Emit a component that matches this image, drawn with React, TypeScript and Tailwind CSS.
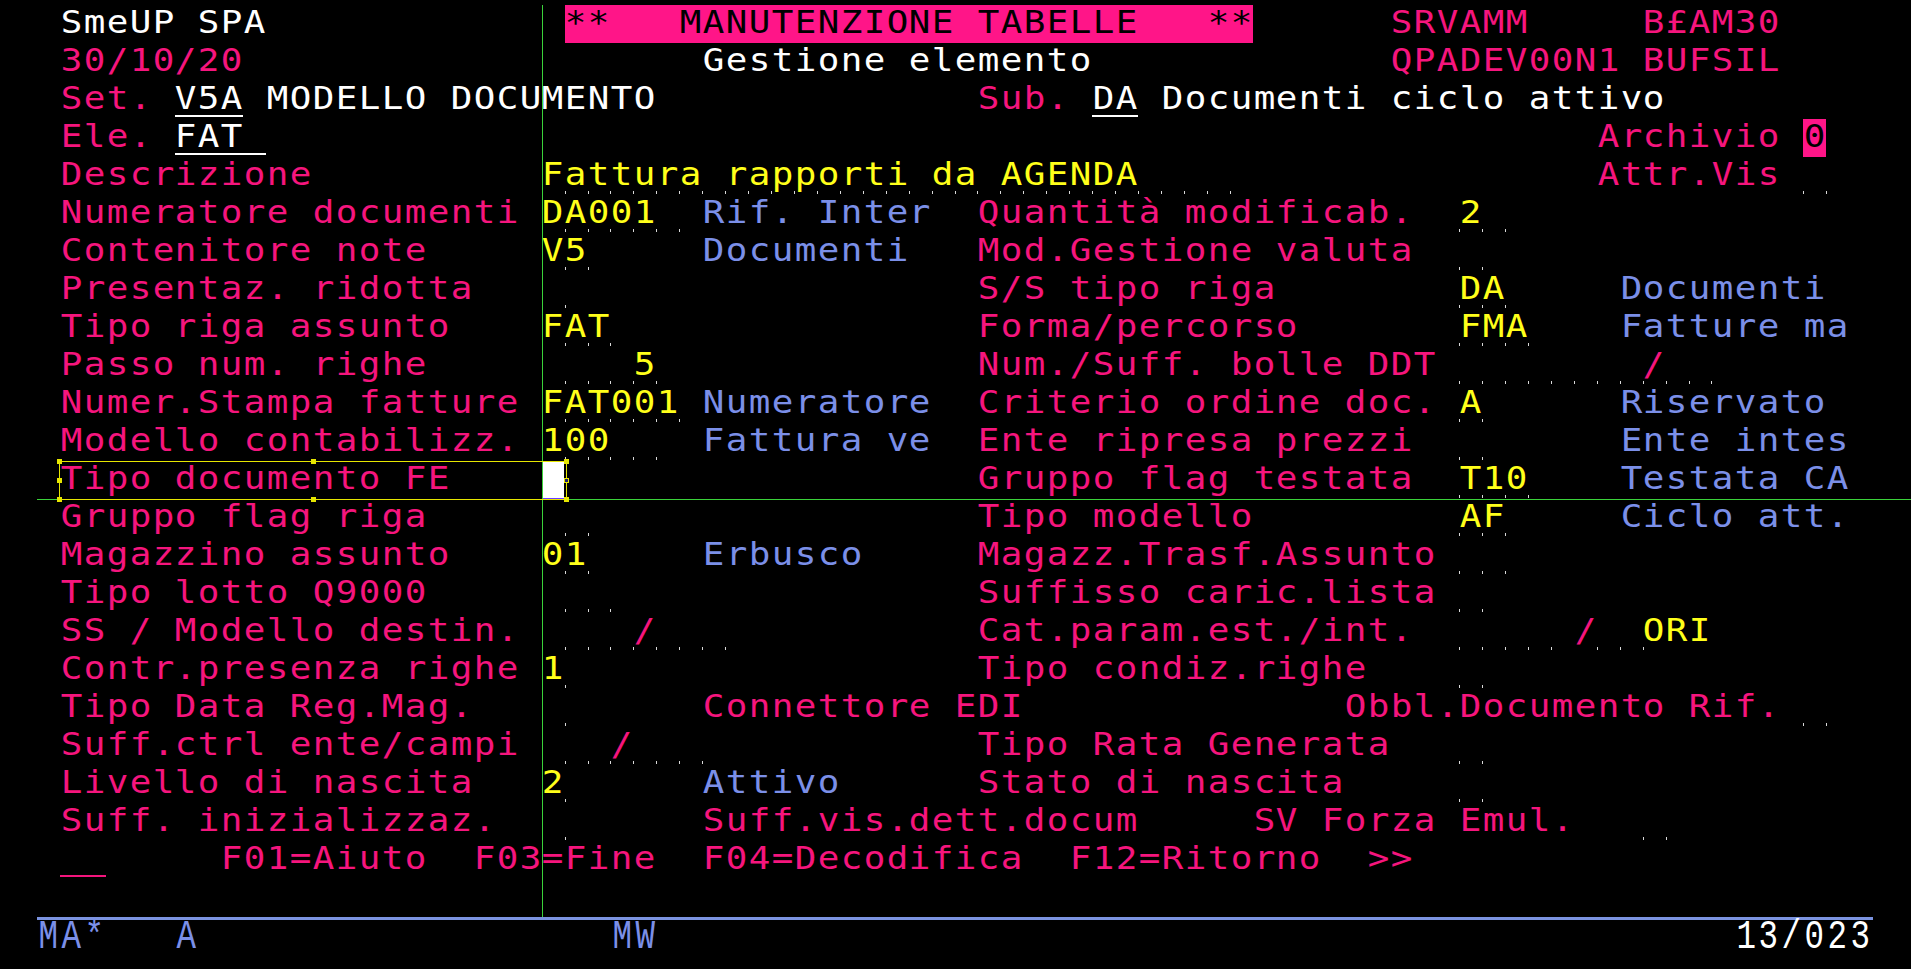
import React from 'react';

type K = 'p' | 'w' | 'y' | 'b' | 'bar' | 'rev' | 'cur';
type Seg = { c: number; t: string; k: K; u?: boolean };
type Cell = { ch: string; k: K | ''; u?: boolean; tick?: boolean };

const rows: Seg[][] = [
  [{ c: 1, t: 'SmeUP SPA', k: 'w' }, { c: 23, t: '**   MANUTENZIONE TABELLE   **', k: 'bar' }, { c: 59, t: 'SRVAMM', k: 'p' }, { c: 70, t: 'B£AM30', k: 'p' }],
  [{ c: 1, t: '30/10/20', k: 'p' }, { c: 29, t: 'Gestione elemento', k: 'w' }, { c: 59, t: 'QPADEV00N1 BUFSIL', k: 'p' }],
  [{ c: 1, t: 'Set.', k: 'p' }, { c: 6, t: 'V5A', k: 'w', u: true }, { c: 9, t: ' MODELLO DOCUMENTO', k: 'w' }, { c: 41, t: 'Sub.', k: 'p' }, { c: 46, t: 'DA', k: 'w', u: true }, { c: 49, t: 'Documenti ciclo attivo', k: 'w' }],
  [{ c: 1, t: 'Ele.', k: 'p' }, { c: 6, t: 'FAT ', k: 'w', u: true }, { c: 68, t: 'Archivio', k: 'p' }, { c: 77, t: '0', k: 'rev' }],
  [{ c: 1, t: 'Descrizione', k: 'p' }, { c: 22, t: 'Fattura rapporti da AGENDA', k: 'y' }, { c: 68, t: 'Attr.Vis', k: 'p' }],
  [{ c: 1, t: 'Numeratore documenti', k: 'p' }, { c: 22, t: 'DA001', k: 'y' }, { c: 29, t: 'Rif. Inter', k: 'b' }, { c: 41, t: 'Quantità modificab.', k: 'p' }, { c: 62, t: '2', k: 'y' }],
  [{ c: 1, t: 'Contenitore note', k: 'p' }, { c: 22, t: 'V5', k: 'y' }, { c: 29, t: 'Documenti', k: 'b' }, { c: 41, t: 'Mod.Gestione valuta', k: 'p' }],
  [{ c: 1, t: 'Presentaz. ridotta', k: 'p' }, { c: 41, t: 'S/S tipo riga', k: 'p' }, { c: 62, t: 'DA', k: 'y' }, { c: 69, t: 'Documenti', k: 'b' }],
  [{ c: 1, t: 'Tipo riga assunto', k: 'p' }, { c: 22, t: 'FAT', k: 'y' }, { c: 41, t: 'Forma/percorso', k: 'p' }, { c: 62, t: 'FMA', k: 'y' }, { c: 69, t: 'Fatture ma', k: 'b' }],
  [{ c: 1, t: 'Passo num. righe', k: 'p' }, { c: 26, t: '5', k: 'y' }, { c: 41, t: 'Num./Suff. bolle DDT', k: 'p' }, { c: 70, t: '/', k: 'p' }],
  [{ c: 1, t: 'Numer.Stampa fatture', k: 'p' }, { c: 22, t: 'FAT001', k: 'y' }, { c: 29, t: 'Numeratore', k: 'b' }, { c: 41, t: 'Criterio ordine doc.', k: 'p' }, { c: 62, t: 'A', k: 'y' }, { c: 69, t: 'Riservato', k: 'b' }],
  [{ c: 1, t: 'Modello contabilizz.', k: 'p' }, { c: 22, t: '100', k: 'y' }, { c: 29, t: 'Fattura ve', k: 'b' }, { c: 41, t: 'Ente ripresa prezzi', k: 'p' }, { c: 69, t: 'Ente intes', k: 'b' }],
  [{ c: 1, t: 'Tipo documento FE', k: 'p' }, { c: 22, t: ' ', k: 'cur' }, { c: 41, t: 'Gruppo flag testata', k: 'p' }, { c: 62, t: 'T10', k: 'y' }, { c: 69, t: 'Testata CA', k: 'b' }],
  [{ c: 1, t: 'Gruppo flag riga', k: 'p' }, { c: 41, t: 'Tipo modello', k: 'p' }, { c: 62, t: 'AF', k: 'y' }, { c: 69, t: 'Ciclo att.', k: 'b' }],
  [{ c: 1, t: 'Magazzino assunto', k: 'p' }, { c: 22, t: '01', k: 'y' }, { c: 29, t: 'Erbusco', k: 'b' }, { c: 41, t: 'Magazz.Trasf.Assunto', k: 'p' }],
  [{ c: 1, t: 'Tipo lotto Q9000', k: 'p' }, { c: 41, t: 'Suffisso caric.lista', k: 'p' }],
  [{ c: 1, t: 'SS / Modello destin.', k: 'p' }, { c: 26, t: '/', k: 'p' }, { c: 41, t: 'Cat.param.est./int.', k: 'p' }, { c: 67, t: '/', k: 'p' }, { c: 70, t: 'ORI', k: 'y' }],
  [{ c: 1, t: 'Contr.presenza righe', k: 'p' }, { c: 22, t: '1', k: 'y' }, { c: 41, t: 'Tipo condiz.righe', k: 'p' }],
  [{ c: 1, t: 'Tipo Data Reg.Mag.', k: 'p' }, { c: 29, t: 'Connettore EDI', k: 'p' }, { c: 57, t: 'Obbl.Documento Rif.', k: 'p' }],
  [{ c: 1, t: 'Suff.ctrl ente/campi', k: 'p' }, { c: 25, t: '/', k: 'p' }, { c: 41, t: 'Tipo Rata Generata', k: 'p' }],
  [{ c: 1, t: 'Livello di nascita', k: 'p' }, { c: 22, t: '2', k: 'y' }, { c: 29, t: 'Attivo', k: 'b' }, { c: 41, t: 'Stato di nascita', k: 'p' }],
  [{ c: 1, t: 'Suff. inizializzaz.', k: 'p' }, { c: 29, t: 'Suff.vis.dett.docum', k: 'p' }, { c: 53, t: 'SV Forza Emul.', k: 'p' }],
  [{ c: 1, t: '  ', k: 'p', u: true }, { c: 8, t: 'F01=Aiuto  F03=Fine  F04=Decodifica  F12=Ritorno  >>', k: 'p' }],
  [],
];

// input fields: [row(0-based), col, len] -> ticks at col..col+len
const fields: [number, number, number][] = [
  [4, 22, 30], [4, 77, 1],
  [5, 22, 6], [5, 62, 2],
  [6, 22, 2], [6, 62, 1],
  [7, 22, 1], [7, 62, 2],
  [8, 22, 3], [8, 62, 3],
  [9, 22, 5], [9, 62, 8], [9, 71, 2],
  [10, 22, 6], [10, 62, 1],
  [11, 22, 5], [11, 62, 1],
  [12, 62, 3],
  [13, 22, 2], [13, 62, 2],
  [14, 22, 2], [14, 62, 2],
  [15, 22, 3], [15, 62, 1],
  [16, 22, 4], [16, 27, 3], [16, 62, 4], [16, 68, 2],
  [17, 22, 1], [17, 62, 1],
  [18, 22, 1], [18, 77, 1],
  [19, 22, 3], [19, 26, 3], [19, 62, 1],
  [20, 22, 1], [20, 62, 1],
  [21, 22, 1], [21, 70, 1],
];

function buildGrid(): Cell[][] {
  const g: Cell[][] = rows.map(() => Array.from({ length: 80 }, () => ({ ch: ' ', k: '' as K | '' })));
  rows.forEach((segs, r) => {
    segs.forEach((s) => {
      Array.from(s.t).forEach((ch, i) => {
        const c = s.c + i;
        if (c < 80) g[r][c] = { ch, k: s.k, u: s.u };
      });
    });
  });
  fields.forEach(([r, c, len]) => {
    for (let i = c; i <= c + len && i < 80; i++) g[r][i].tick = true;
  });
  return g;
}

const colorClass: Record<string, string> = {
  '': 'text-white',
  p: 'text-[#f5157d]',
  w: 'text-white',
  y: 'text-[#ffff1a]',
  b: 'text-[#7b8fe8]',
  bar: 'bg-[#ff1588] text-black',
  rev: 'bg-[#ff1588] text-black',
  cur: 'bg-white border-l border-b border-l-[#b040ff] border-b-[#6a3cff] mr-px',
};

function Row({ cells }: { cells: Cell[] }) {
  return (
    <div className="grid h-[38px] grid-cols-[repeat(80,22.95px)]">
      {cells.map((cell, i) => (
        <span
          key={i}
          className={`relative h-[38px] whitespace-pre text-center leading-[34px] ${colorClass[cell.k]}`}
        >
          <span className="inline-block scale-x-[1.12]">{cell.ch}</span>
          {cell.u && <span className="absolute bottom-[2px] left-0 right-0 h-[2px] bg-current" />}
          {cell.tick && <span className="absolute bottom-[1px] left-0 h-[3px] w-px bg-[#d8d8d8]" />}
        </span>
      ))}
    </div>
  );
}

function Handle({ dark }: { dark?: boolean }) {
  return (
    <span
      className={`block h-[5px] w-[5px] ${dark ? 'border border-[#e6e600] bg-[#1a1a6a]' : 'bg-[#e6e600]'}`}
    />
  );
}

export default function App() {
  const grid = buildGrid();
  const status: { c: number; t: string; cls: string }[] = [
    { c: 0, t: 'MA*', cls: 'text-[#7b8fe8]' },
    { c: 6, t: 'A', cls: 'text-[#7b8fe8]' },
    { c: 25, t: 'MW', cls: 'text-[#7b8fe8]' },
    { c: 74, t: '13/023', cls: 'text-white' },
  ];
  const statusCells: { ch: string; cls: string }[] = Array.from({ length: 80 }, () => ({ ch: ' ', cls: '' }));
  status.forEach((s) => Array.from(s.t).forEach((ch, i) => (statusCells[s.c + i] = { ch, cls: s.cls })));

  return (
    <div className="relative h-[969px] w-[1911px] overflow-hidden bg-black font-['DejaVu_Sans_Mono',monospace] text-[32px]">
      <div className="flex flex-col pl-[37px] pt-[5px]">
        {grid.map((cells, r) => (
          <Row key={r} cells={cells} />
        ))}
        <div className="h-[3px] w-[1836px] bg-[#7b93e0]" />
        <div className="grid h-[38px] grid-cols-[repeat(80,22.95px)] font-['Liberation_Mono',monospace] text-[31px] leading-[38px]">
          {statusCells.map((s, i) => (
            <span key={i} className={`whitespace-pre text-center ${s.cls}`}>
              <span className="inline-block origin-[50%_60%] scale-x-[1.05] scale-y-[1.3]">{s.ch}</span>
            </span>
          ))}
        </div>
      </div>

      {/* crosshair ruler */}
      <div className="absolute left-[542px] top-[5px] h-[912px] w-px bg-[#3ad23a]" />
      <div className="absolute left-[37px] right-0 top-[499px] h-px bg-[#3ad23a]" />

      {/* selection box with handles */}
      <div className="absolute left-[59px] top-[461px] flex h-[39px] w-[508px] flex-col justify-between border border-[#e6e600]">
        <div className="-mx-[3px] -mt-[3px] flex justify-between">
          <Handle />
          <Handle />
          <Handle />
        </div>
        <div className="-mx-[3px] flex justify-between">
          <Handle />
          <Handle dark />
        </div>
        <div className="-mx-[3px] -mb-[3px] flex justify-between">
          <Handle />
          <Handle />
          <Handle />
        </div>
      </div>
    </div>
  );
}
